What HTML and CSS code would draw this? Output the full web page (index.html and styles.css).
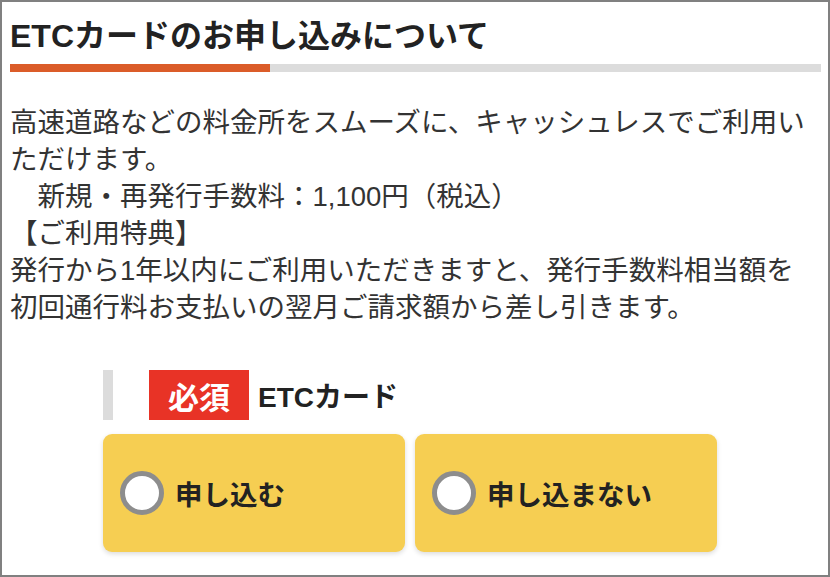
FILE: index.html
```html
<!DOCTYPE html>
<html lang="ja">
<head>
  <meta charset="UTF-8">
  <title>ETCカードのお申し込み</title>
  <meta name="viewport" content="width=device-width, initial-scale=1.0">
  <link rel="stylesheet" href="styles.css">
</head>
<body>
  <div id="frame">
    <h2 class="section-title">ETCカードのお申し込みについて</h2>
    <div class="title-bar"><div class="title-bar-fill"></div></div>

    <p class="lead">
      高速道路などの料金所をスムーズに、キャッシュレスでご利用いただけます。<br>
      　新規・再発行手数料：1,100円（税込）<br>
      【ご利用特典】<br>
      発行から1年以内にご利用いただきますと、発行手数料相当額を初回通行料お支払いの翌月ご請求額から差し引きます。
    </p>

    <div class="field">
      <div class="field-label">
        <span class="required">必須</span>
        <span class="label-text">ETCカード</span>
      </div>
      <div class="choices">
        <label class="choice">
          <input type="radio" name="etc" value="yes">
          <span class="radio"></span>
          <span class="choice-text">申し込む</span>
        </label>
        <label class="choice">
          <input type="radio" name="etc" value="no">
          <span class="radio"></span>
          <span class="choice-text">申し込まない</span>
        </label>
      </div>
    </div>
  </div>
</body>
</html>
```

FILE: styles.css
```css
html, body {
  margin: 0;
  padding: 0;
  background: #fff;
  font-family: "Liberation Sans", "Noto Sans CJK JP", sans-serif;
  color: #333;
}
#frame {
  box-sizing: border-box;
  width: 100vw;
  height: 100vh;
  border: 2px solid #808080;
  padding: 11px 7px 0 8px;
  overflow: hidden;
}
.section-title {
  margin: 0;
  font-size: 32px;
  line-height: 46px;
  font-weight: 700;
  color: #222;
}
.title-bar {
  margin-top: 5px;
  height: 8px;
  background: #dcdcdc;
}
.title-bar-fill {
  width: 32%;
  height: 100%;
  background: #db5c29;
}
.lead {
  margin: 32px 0 0 0;
  font-size: 27.5px;
  line-height: 37px;
  color: #333;
}

/* form */
.field {
  margin-top: 44px;
  padding-left: 93px;
}
.field-label {
  display: flex;
  align-items: center;
  height: 50px;
  border-left: 10px solid #dcdcdc;
  padding-left: 36px;
}
.required {
  display: flex;
  align-items: center;
  justify-content: center;
  width: 100px;
  height: 50px;
  background: #e83326;
  color: #fff;
  font-size: 31px;
  font-weight: 700;
}
.label-text {
  margin-left: 9px;
  font-size: 28px;
  font-weight: 700;
  color: #222;
}
.choices {
  display: flex;
  gap: 10px;
  margin-top: 14px;
}
.choice {
  display: flex;
  align-items: center;
  box-sizing: border-box;
  width: 302px;
  height: 118px;
  padding-left: 17px;
  background: #f6ce52;
  border-radius: 9px;
  box-shadow: 0 2px 5px rgba(0,0,0,0.14);
  cursor: pointer;
}
.choice input {
  display: none;
}
.radio {
  box-sizing: border-box;
  width: 44px;
  height: 44px;
  border-radius: 50%;
  border: 5px solid #8d8d8d;
  background: #fff;
}
.choice-text {
  margin-left: 11px;
  font-size: 27.5px;
  font-weight: 700;
  color: #222;
}
```
